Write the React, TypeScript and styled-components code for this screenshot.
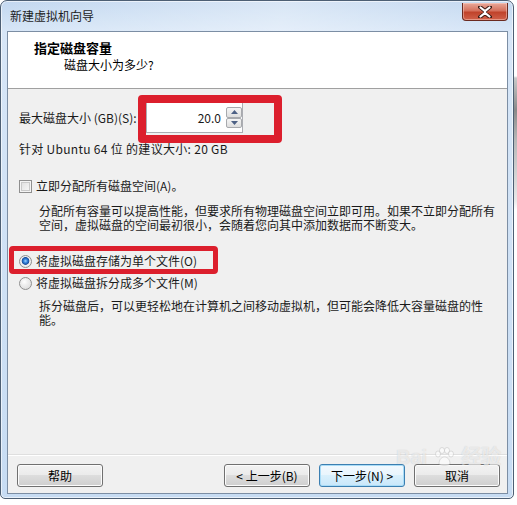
import React from "react";
import styled, { createGlobalStyle } from "styled-components";

const Global = createGlobalStyle`
  html, body { margin: 0; padding: 0; background: #ffffff; }
  body { font-family: "Noto Sans CJK SC", "Noto Sans", sans-serif; font-size: 12px; color: #1a1a1a; }
  * { box-sizing: border-box; }
`;

const Screen = styled.div`
  position: relative;
  width: 517px;
  height: 505px;
  display: flex;
  overflow: hidden;
  background: #ffffff;
`;

const BackStrip = styled.div`
  flex: 1;
  background: linear-gradient(to bottom, #ffffff 0px, #ffffff 76px, #c9c9c9 78px, #8a8a8a 110px, #b8b8b8 140px, #e8e8e8 200px, #ffffff 210px);
`;

const Window = styled.div`
  width: 514px;
  height: 499px;
  border: 1px solid #4d5f74;
  border-radius: 7px 7px 5px 5px;
  background: linear-gradient(to bottom, #c3d8f0 0px, #d7e6f7 30px, #c7dcf3 100%);
  padding: 0 5px 4px 6px;
  display: flex;
  flex-direction: column;
  box-shadow: inset 0 0 0 1px rgba(255, 255, 255, 0.6);
`;

const TitleBar = styled.div`
  height: 30px;
  display: flex;
  align-items: flex-start;
  justify-content: space-between;
  background: linear-gradient(100deg, rgba(255,255,255,0.0) 0%, rgba(255,255,255,0.35) 55%, rgba(255,255,255,0) 100%);
`;

const TitleText = styled.div`
  margin-top: 7px;
  margin-left: 3px;
  font-size: 12px;
  line-height: 16px;
  color: #1c1c1c;
`;

const CloseButton = styled.div`
  width: 46px;
  height: 18px;
  margin-top: 2px;
  border: 1px solid #6a2a20;
  border-top: none;
  border-radius: 0 0 4px 4px;
  background: linear-gradient(to bottom, #e9a99a 0%, #d5715d 45%, #c0432b 55%, #d0614a 100%);
  display: flex;
  align-items: center;
  justify-content: center;
  box-shadow: inset 0 0 0 1px rgba(255, 220, 210, 0.45);
`;

const Client = styled.div`
  flex: 1;
  border: 1px solid #7c8ea4;
  background: #f0f0f0;
  display: flex;
  flex-direction: column;
`;

const Header = styled.div`
  height: 57px;
  background: #ffffff;
  border-bottom: 1px solid #a0a0a0;
  padding: 8px 0 0 26px;
`;

const HeaderTitle = styled.div`
  font-weight: bold;
  font-size: 13px;
  line-height: 16px;
  color: #000;
`;

const HeaderSub = styled.div`
  margin-top: 1px;
  margin-left: 30px;
  font-size: 12px;
  line-height: 16px;
  color: #000;
`;

const Body = styled.div`
  flex: 1;
  padding-left: 11px;
  display: flex;
  flex-direction: column;
`;

const Row = styled.div<{ $top: number; $h?: number }>`
  margin-top: ${(p) => p.$top}px;
  height: ${(p) => p.$h ?? 16}px;
  display: flex;
  align-items: center;
  line-height: 16px;
  white-space: nowrap;
`;

const SizeLabel = styled.span`
  width: 127px;
`;

const Latin = styled.span`
  letter-spacing: 0.3px;
`;

const Spin = styled.div`
  width: 97px;
  height: 31px;
  display: flex;
  align-items: center;
  background: #ffffff;
  border: 1px solid #abadb3;
`;

const SpinValue = styled.div`
  flex: 1;
  text-align: right;
  padding-right: 5px;
`;

const SpinButtons = styled.div`
  width: 16px;
  height: 21px;
  display: flex;
  flex-direction: column;
`;

const SpinArrow = styled.div`
  flex: 1;
  border: 1px solid #a7a9ad;
  border-radius: 2px;
  background: linear-gradient(to bottom, #f5f5f5, #dedede);
  display: flex;
  align-items: center;
  justify-content: center;
`;

const Check = styled.span`
  width: 13px;
  height: 13px;
  border: 1px solid #8f8f8f;
  background: linear-gradient(135deg, #dcdcdc, #fbfbfb);
  box-shadow: inset 0 0 0 1px #f4f4f4, inset 0 0 0 2px #c9c9c9;
  margin-right: 4px;
  flex: none;
`;

const Radio = styled.span<{ $on?: boolean }>`
  width: 13px;
  height: 13px;
  border-radius: 50%;
  border: 1px solid #8f8f8f;
  background: ${(p) =>
    p.$on
      ? "radial-gradient(circle at 50% 45%, #9ed2ff 0px, #2f7fd8 2px, #1b4f9c 3.5px, #f2f2f2 4.2px, #dedede 100%)"
      : "radial-gradient(circle at 40% 35%, #ffffff 0px, #f0f0f0 3px, #d6d6d6 100%)"};
  margin-right: 4px;
  flex: none;
`;

const Desc = styled.div<{ $top: number }>`
  margin-top: ${(p) => p.$top}px;
  margin-left: 20px;
  line-height: 14px;
  width: 462px;
`;

const Footer = styled.div`
  height: 39px;
  border-top: 1px solid #dfdfdf;
  box-shadow: inset 0 1px 0 #ffffff;
  display: flex;
  align-items: flex-start;
  padding: 9px 7px 0 9px;
  gap: 9px;
`;

const Spacer = styled.div`
  flex: 1;
`;

const Button = styled.div<{ $default?: boolean }>`
  width: 86px;
  height: 23px;
  border-radius: 3px;
  border: 1px solid ${(p) => (p.$default ? "#3c7fb1" : "#707070")};
  background: ${(p) =>
    p.$default
      ? "linear-gradient(to bottom, #f2f9fe 0%, #e9f5fd 49%, #d9f0fc 50%, #c9e7fa 100%)"
      : "linear-gradient(to bottom, #f2f2f2 0%, #ebebeb 49%, #dddddd 50%, #cfcfcf 100%)"};
  box-shadow: inset 0 0 0 1px ${(p) => (p.$default ? "#a9dcf7" : "#fcfcfc")};
  display: flex;
  align-items: center;
  justify-content: center;
  font-size: 12px;
  color: #000;
`;

const RedBox = styled.div<{ $x: number; $y: number; $w: number; $h: number; $t: number }>`
  position: absolute;
  left: ${(p) => p.$x}px;
  top: ${(p) => p.$y}px;
  width: ${(p) => p.$w}px;
  height: ${(p) => p.$h}px;
  border: ${(p) => p.$t}px solid #dc1f2d;
  border-radius: 4px;
  pointer-events: none;
`;

const Watermark = styled.div`
  position: absolute;
  left: 396px;
  top: 446px;
  height: 22px;
  display: flex;
  align-items: center;
  color: rgba(255, 255, 255, 0.6);
  text-shadow: 0 0 1px rgba(120, 120, 120, 0.35);
  font-family: "Liberation Sans", "Noto Sans CJK SC", sans-serif;
  font-size: 20px;
  font-weight: bold;
  line-height: 20px;
  pointer-events: none;
`;

const WmGap = styled.span`
  display: flex;
  width: 34px;
  justify-content: center;
`;

export default function App() {
  return (
    <>
      <Global />
      <Screen>
        <Window>
          <TitleBar>
            <TitleText>新建虚拟机向导</TitleText>
            <CloseButton>
              <svg width="14" height="12" viewBox="0 0 14 12">
                <path
                  d="M2 1 L7 5 L12 1 M2 11 L7 7 L12 11 M7 5 L7 7"
                  stroke="#3a1a14"
                  strokeWidth="4"
                  strokeLinecap="round"
                  fill="none"
                />
                <path
                  d="M2.5 1.5 L7 5.2 L11.5 1.5 M2.5 10.5 L7 6.8 L11.5 10.5 M7 5 L7 7"
                  stroke="#ffffff"
                  strokeWidth="2.2"
                  strokeLinecap="round"
                  fill="none"
                />
              </svg>
            </CloseButton>
          </TitleBar>
          <Client>
            <Header>
              <HeaderTitle>指定磁盘容量</HeaderTitle>
              <HeaderSub>磁盘大小为多少?</HeaderSub>
            </Header>
            <Body>
              <Row $top={13} $h={31}>
                <SizeLabel>最大磁盘大小 (GB)(S):</SizeLabel>
                <Spin>
                  <SpinValue>20.0</SpinValue>
                  <SpinButtons>
                    <SpinArrow>
                      <svg width="7" height="4" viewBox="0 0 7 4">
                        <path d="M0 4 L3.5 0 L7 4 Z" fill="#4d6185" />
                      </svg>
                    </SpinArrow>
                    <SpinArrow>
                      <svg width="7" height="4" viewBox="0 0 7 4">
                        <path d="M0 0 L3.5 4 L7 0 Z" fill="#4d6185" />
                      </svg>
                    </SpinArrow>
                  </SpinButtons>
                </Spin>
              </Row>
              <Row $top={8}>
                <Latin>针对 Ubuntu 64 位 的建议大小: 20 GB</Latin>
              </Row>
              <Row $top={21}>
                <Check />
                立即分配所有磁盘空间(A)。
              </Row>
              <Desc $top={10}>
                分配所有容量可以提高性能，但要求所有物理磁盘空间立即可用。如果不立即分配所有空间，虚拟磁盘的空间最初很小，会随着您向其中添加数据而不断变大。
              </Desc>
              <Row $top={21}>
                <Radio $on />
                将虚拟磁盘存储为单个文件(O)
              </Row>
              <Row $top={6}>
                <Radio />
                将虚拟磁盘拆分成多个文件(M)
              </Row>
              <Desc $top={8}>
                拆分磁盘后，可以更轻松地在计算机之间移动虚拟机，但可能会降低大容量磁盘的性能。
              </Desc>
            </Body>
            <Footer>
              <Button>帮助</Button>
              <Spacer />
              <Button>&lt; 上一步(B)</Button>
              <Button $default>下一步(N) &gt;</Button>
              <Button>取消</Button>
            </Footer>
          </Client>
        </Window>
        <BackStrip />
        <RedBox $x={138} $y={95} $w={144} $h={48} $t={8} />
        <RedBox $x={9} $y={246} $w={209} $h={28} $t={5} />
        <Watermark>
          <span>Bai</span>
          <WmGap>
            <svg width="22" height="20" viewBox="0 0 22 20">
              <g fill="rgba(255,255,255,0.6)" stroke="rgba(150,150,150,0.35)" strokeWidth="0.8">
                <ellipse cx="5" cy="7" rx="2.5" ry="3" />
                <ellipse cx="9" cy="3.5" rx="2.5" ry="3" />
                <ellipse cx="14" cy="3.5" rx="2.5" ry="3" />
                <ellipse cx="18" cy="7" rx="2.5" ry="3" />
                <path d="M6 17 C6 12 9 10 11.5 10 C14 10 17 12 17 17 C14 19 9 19 6 17 Z" />
              </g>
            </svg>
          </WmGap>
          <span>经验</span>
        </Watermark>
      </Screen>
    </>
  );
}
